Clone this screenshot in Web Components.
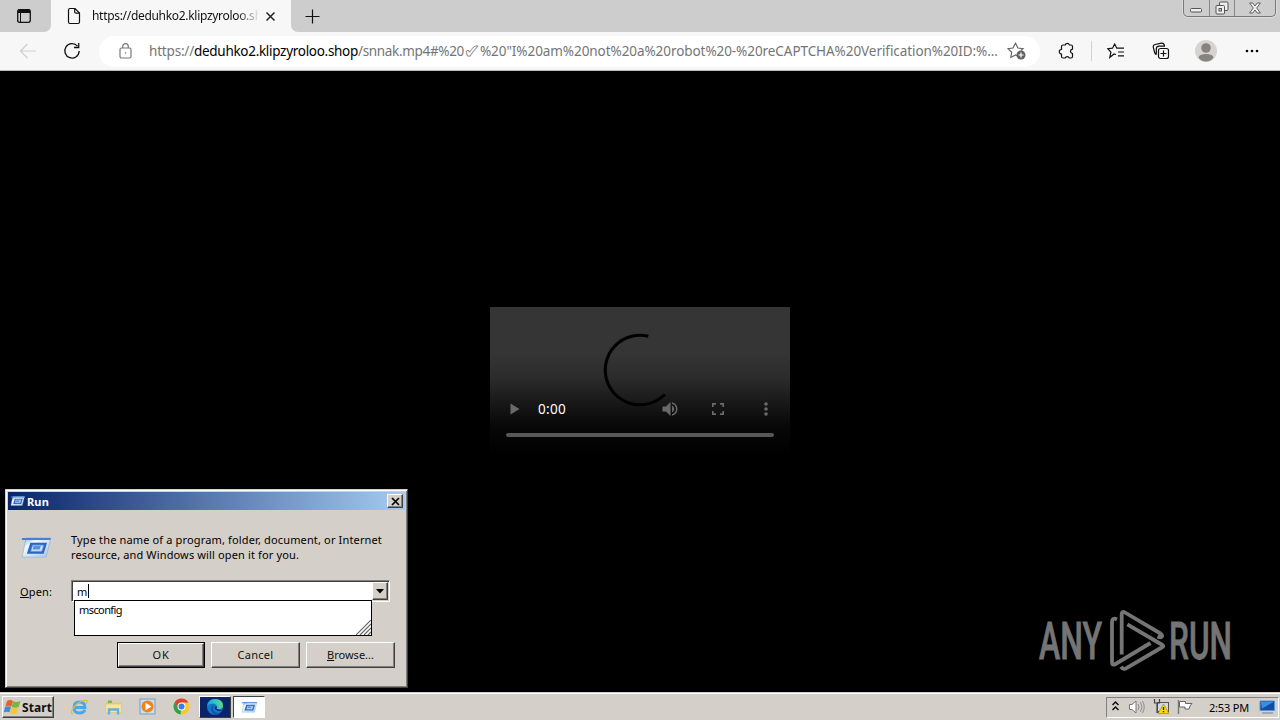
<!DOCTYPE html>
<html lang="en">
<head>
<meta charset="utf-8">
<title>Desktop</title>
<style>
  body {
    margin: 0;
    width: 1280px;
    height: 720px;
    overflow: hidden;
    background: #000;
    font-family: "Noto Sans", "Open Sans", sans-serif;
  }
</style>
</head>
<body>
<desk-top>
  <edge-browser slot="window"></edge-browser>
  <run-dialog slot="dialog"></run-dialog>
  <task-bar slot="bar"></task-bar>
</desk-top>

<script>
const RUN_ICON = `
  <defs>
    <linearGradient id="rim" x1="0" y1="0" x2="1" y2="1">
      <stop offset="0" stop-color="#6fa0e0"/><stop offset=".3" stop-color="#f2f7fd"/><stop offset="1" stop-color="#a5c4ec"/>
    </linearGradient>
  </defs>
  <path d="M5 1H31L26 21H1Z" fill="url(#rim)" stroke="#8fb0dd" stroke-width=".7"/>
  <path d="M1 1H31L30.300 3.200H.5Z" fill="#4a80cc"/>
  <path d="M9.500 6H27L23.500 17.500H6Z" fill="#2866c5"/>
  <path d="M12 8.500H23.500L21.500 15H10Z" fill="#cfe2f8" stroke="#6d9fe2" stroke-width=".8"/>
  <path d="M13 9.500H20.500L19.300 13H12Z" fill="#5b8fdc"/>`;

class DeskTop extends HTMLElement {
  constructor() {
    super();

    this.attachShadow({ mode: "open" });
    this.shadowRoot.innerHTML = `
    <style>
        :host {
            position: relative;
            display: grid;
            grid-template-rows: 692px 28px;
            width: 1280px;
            height: 720px;
        }

        #dialog {
            position: absolute;
            left: 5px;
            top: 489px;
        }

        #mark {
            position: absolute;
            left: 1036px;
            top: 606px;
        }
    </style>
    <slot name="window"></slot>
    <slot name="bar"></slot>
    <div id="mark"><any-run></any-run></div>
    <div id="dialog"><slot name="dialog"></slot></div>
    `;
  }
}

class AnyRun extends HTMLElement {
  constructor() {
    super();

    this.attachShadow({ mode: "open" });
    this.shadowRoot.innerHTML = `
    <style>
        :host {
            display: block;
        }

        svg {
            display: block;
            overflow: visible;
        }

        text {
            font: 500 52px Roboto, sans-serif;
            fill: #757575;
            stroke: #757575;
            stroke-width: .8px;
        }
    </style>
    <svg width="210" height="80">
      <text x="3" y="53" textLength="63" lengthAdjust="spacingAndGlyphs">ANY</text>
      <text x="133" y="53" textLength="63" lengthAdjust="spacingAndGlyphs">RUN</text>
      <g fill="none" stroke="#757575" stroke-width="3.800" stroke-linejoin="round">
        <path d="M85.700 48.500V8.500Q85.700 4.500 89 6.500L124.500 27.500Q126.500 29 126 30.500Q125 32 121.500 30.500"/>
        <path d="M91.300 18.300L126.500 39Q128 40 126.500 41L90 62.300Q87 64 85 60.800"/>
        <path d="M81 13.500Q76 11 76 16V56Q76 60 79.500 58L114.500 37"/>
      </g>
    </svg>
    `;
  }
}

class EdgeBrowser extends HTMLElement {
  constructor() {
    super();

    this.attachShadow({ mode: "open" });
    this.shadowRoot.innerHTML = `
    <style>
        :host {
            display: grid;
            grid-template-rows: 32px 39px 1fr;
            background: #000;
            color: #111;
        }

        svg {
            display: block;
            flex: none;
        }

        #tabs {
            display: flex;
            background: #cdcdcd;
        }

        #tabs-left {
            display: flex;
            background: #f7f7f7;
        }

        #tab-actions {
            width: 51px;
            box-sizing: border-box;
            padding-right: 3px;
            display: flex;
            justify-content: center;
            align-items: center;
            background: #cdcdcd;
            border-bottom-right-radius: 7px;
        }

        #new-tab {
            width: 42px;
            display: flex;
            align-items: center;
            justify-content: center;
            background: #cdcdcd;
            border-bottom-left-radius: 7px;
        }

        #tab {
            width: 240px;
            box-sizing: border-box;
            padding: 0 14px 0 15px;
            display: flex;
            align-items: center;
            background: linear-gradient(#f7f7f7, #f7f7f7) content-box, #f7f7f7;
            font-size: 12px;
        }

        #title {
            width: 166px;
            margin: 0 7px 0 10px;
            overflow: hidden;
            white-space: nowrap;
            line-height: 18px;
            -webkit-mask-image: linear-gradient(90deg, #000 145px, transparent 168px);
            mask-image: linear-gradient(90deg, #000 145px, transparent 168px);
        }

        #controls {
            margin-left: auto;
            margin-right: 4px;
            width: 93px;
            height: 17px;
            box-sizing: border-box;
            display: grid;
            grid-template-columns: 25px 25px 1fr;
            border: 1px solid #777;
            border-top: 0;
            border-radius: 0 0 5px 5px;
            box-shadow: 0 0 0 1px #dcdcdc;
        }

        #controls span {
            display: flex;
            align-items: center;
            justify-content: center;
        }

        #controls span + span {
            border-left: 1px solid #888;
        }

        #toolbar {
            display: flex;
            align-items: center;
            box-sizing: border-box;
            background: #f7f7f7;
            border-bottom: 1px solid #b9b9b9;
        }

        #address {
            display: flex;
            align-items: center;
            width: 941px;
            height: 31px;
            box-sizing: border-box;
            padding-left: 19px;
            border-radius: 16px;
            background: #fff;
            font-size: 13.500px;
            color: #757575;
            line-height: 20px;
        }

        #url {
            display: flex;
            width: 848px;
            margin: 0 10px 0 16px;
        }

        #host {
            color: #000;
        }

        #tick {
            width: 16px;
            font-family: "DejaVu Sans", sans-serif;
            font-size: 19px;
            color: transparent;
            -webkit-text-stroke: .8px #777;
        }

        #buttons {
            display: grid;
            grid-template-columns: 52px 47px 43px 47px 46px;
            align-items: center;
            justify-items: center;
        }

        #extensions {
            justify-self: stretch;
            padding: 1px 0 1px 18px;
            border-right: 1px solid #d2d2d2;
        }

        #page {
            display: flex;
            justify-content: center;
            align-items: flex-start;
            padding-top: 236px;
        }
    </style>
    <div id="tabs">
      <div id="tabs-left">
        <div id="tab-actions">
          <svg width="16" height="16" viewBox="0 0 16 16"><rect x="1.700" y="1.700" width="12.600" height="12.600" rx="2" fill="none" stroke="#111" stroke-width="1.300"/><path d="M2 1.500H14V5H2Z" fill="#111"/><path d="M4.500 5V14" stroke="#111"/></svg>
        </div>
        <div id="tab">
          <svg width="16" height="18" viewBox="0 0 16 18"><path d="M2.500 3Q2.500 1.500 4 1.500H9L13.500 6V15Q13.500 16.500 12 16.500H4Q2.500 16.500 2.500 15ZM8.700 1.500V5Q8.700 6.200 10 6.200H13.500" fill="none" stroke="#111" stroke-width="1.200"/></svg>
          <div id="title"><fit-text width="157">https://deduhko2.klipzyroloo.</fit-text>sh</div>
          <svg width="11" height="11" viewBox="0 0 11 11"><path d="M1.500 1.500L9.500 9.500M9.500 1.500L1.500 9.500" stroke="#222" stroke-width="1.500"/></svg>
        </div>
        <div id="new-tab">
          <svg width="15" height="15" viewBox="0 0 15 15"><path d="M7.500 .5V14.500M.5 7.500H14.500" stroke="#111" stroke-width="1.200"/></svg>
        </div>
      </div>
      <div id="controls">
        <span><svg width="13" height="6" style="margin-top: 3px"><rect x=".5" y="1.500" width="11" height="3.500" rx="1" fill="#eee" stroke="#555"/></svg></span>
        <span><svg width="14" height="14" viewBox="0 0 14 14"><rect x="4.500" y="1" width="8.500" height="8.500" rx="1" fill="#eee" stroke="#555"/><rect x="1" y="4.500" width="8.500" height="8.500" rx="1" fill="#eee" stroke="#555"/><rect x="4" y="7.500" width="2.500" height="2.500" fill="#ccc" stroke="#555"/></svg></span>
        <span><svg width="12" height="12" viewBox="0 0 12 12"><path d="M.6 1H3.800L6 4L8.200 1H11.400L7.700 6L11.400 11H8.200L6 8L3.800 11H.6L4.300 6Z" fill="#eee" stroke="#555" stroke-width=".9"/></svg></span>
      </div>
    </div>
    <div id="toolbar">
      <svg width="99" height="38" viewBox="0 32 99 38" fill="none">
        <path d="M36 51H20.500M27.500 44L20.500 51L27.500 58" stroke="#d0d0d0" stroke-width="1.200"/>
        <path d="M77.500 46.200A7.200 7.200 0 1 0 79.200 51M78.700 43V47.500H74" stroke="#111" stroke-width="1.300"/>
      </svg>
      <div id="address">
        <svg width="15" height="18" viewBox="0 0 15 18" fill="none" stroke="#777" stroke-width="1.200"><rect x="2" y="6" width="11" height="10" rx="1.500"/><path d="M4.700 6V4.500A2.800 2.800 0 0 1 10.300 4.500V6"/><circle cx="7.500" cy="11" r=".8" fill="#777" stroke="none"/></svg>
        <div id="url"><fit-text width="45">https://</fit-text><fit-text width="164" id="host">deduhko2.klipzyroloo.shop</fit-text><fit-text width="106">/snnak.mp4#%20</fit-text><span id="tick">✔</span><fit-text width="518">%20"I%20am%20not%20a%20robot%20-%20reCAPTCHA%20Verification%20ID:%...</fit-text></div>
        <svg width="20" height="20" viewBox="0 0 20 20"><path d="M10.500 15L8.500 14L3.800 16.500L4.700 11.300L1 7.700L6 7L8.500 2.300L11 7L16 7.700L14 9.500" fill="none" stroke="#666" stroke-width="1.200"/><circle cx="14" cy="14" r="4.500" fill="#606060"/><path d="M14 11.500V16.500M11.500 14H16.500" stroke="#fff" stroke-width="1.200"/></svg>
      </div>
      <div id="buttons">
        <div id="extensions"><svg width="18" height="18" viewBox="0 0 18 18"><path d="M3.500 4.500Q3.500 3 5 3H7.200A2.200 2.200 0 0 1 11.400 3H13Q14.500 3 14.500 4.500V7A1 1 0 0 1 14 7.300A2 2 0 0 0 14 11.200L14.500 11.500V14.500Q14.500 16 13 16H11.300A2.200 2.200 0 0 0 7.200 16H5Q3.500 16 3.500 14.500V12A2.200 2.200 0 0 1 3.500 7.500Z" fill="none" stroke="#111" stroke-width="1.200"/></svg></div>
        <svg width="18" height="18" viewBox="0 0 18 18"><path d="M9 12.500L7 12L2.800 15.500L3.900 10.200L.8 6.700L5.500 6.200L7.700 2L9.800 6.200H17M11 10H17M11 13.800H17" fill="none" stroke="#111" stroke-width="1.200"/></svg>
        <svg width="18" height="18" viewBox="0 0 18 18" fill="none" stroke="#111" stroke-width="1.200"><rect x="6.500" y="6.500" width="10" height="10" rx="2"/><path d="M11.500 8.500V14.500M8.500 11.500H14.500M4.500 12.800Q3 12 2.500 10L1.200 5Q1 3 3 2.500L9.500 1.200Q12 1 12.500 4M4.300 12V7Q4.500 4.200 7 4.200H13"/></svg>
        <svg width="22" height="22" viewBox="0 0 22 22"><circle cx="11" cy="11" r="11" fill="#d6d4d1"/><circle cx="11" cy="8" r="4.800" fill="#878480"/><path d="M3.500 17.500Q4 14 11 14T18.500 17.500Q16 21.500 11 21.500T3.500 17.500Z" fill="#878480"/></svg>
        <svg width="16" height="4" viewBox="0 0 16 4"><circle cx="3" cy="2" r="1.300"/><circle cx="8" cy="2" r="1.300"/><circle cx="13" cy="2" r="1.300"/></svg>
      </div>
    </div>
    <div id="page"><video-box></video-box></div>
    `;
  }
}

class VideoBox extends HTMLElement {
  constructor() {
    super();

    this.attachShadow({ mode: "open" });
    this.shadowRoot.innerHTML = `
    <style>
        :host {
            position: relative;
            display: flex;
            flex-direction: column;
            width: 300px;
            height: 150px;
            background: linear-gradient(#353535 0, #353535 45px, #2c2c2c 70px, #151515 100px, #070707 120px, #000 150px);
        }

        #spinner {
            position: absolute;
            left: 110px;
            top: 23px;
        }

        #controls {
            display: grid;
            grid-template-columns: 48px 108px 48px 48px 48px;
            align-items: center;
            height: 32px;
            margin-top: 86px;
            position: relative;
        }

        #controls svg {
            justify-self: center;
            fill: #6a6a6a;
        }

        #time {
            color: #fff;
            font-size: 13.500px;
            line-height: 20px;
        }

        #track {
            height: 4px;
            margin: 8px 16px 0;
            border-radius: 2px;
            background: #575757;
        }
    </style>
    <svg id="spinner" width="80" height="80"><path d="M49 6.200A34.800 34.800 0 1 0 65.500 64.500" transform="translate(-.7 0)" fill="none" stroke="#000" stroke-width="3"/></svg>
    <div id="controls">
      <svg width="18" height="18" viewBox="0 0 18 18"><path d="M5.500 3.500V14.500L14.500 9Z"/></svg>
      <span id="time"><fit-text width="28">0:00</fit-text></span>
      <svg width="18" height="18" viewBox="0 0 18 18"><path d="M1.500 6.500H5L9.500 2V16L5 11.500H1.500ZM11 5.500Q13.200 6.700 13.200 9T11 12.500ZM11 2.200Q16.500 3.700 16.500 9T11 15.800V14.200Q15 13 15 9T11 3.800Z"/></svg>
      <svg width="18" height="18" viewBox="0 0 18 18"><path d="M3 3H7V4.700H4.700V7H3ZM11 3H15V7H13.300V4.700H11ZM3 11H4.700V13.300H7V15H3ZM13.300 11H15V15H11V13.300H13.300Z"/></svg>
      <svg width="18" height="18" viewBox="0 0 18 18"><circle cx="9" cy="4" r="1.800"/><circle cx="9" cy="9" r="1.800"/><circle cx="9" cy="14" r="1.800"/></svg>
    </div>
    <div id="track"></div>
    `;
  }
}

// Classic raised push button, "default" gets the extra black frame
class ClassicButton extends HTMLElement {
  constructor() {
    super();

    this.attachShadow({ mode: "open" });
    this.shadowRoot.innerHTML = `
    <style>
        :host {
            display: flex;
            align-items: center;
            justify-content: center;
            box-sizing: border-box;
            background: #d4cfc8;
            border: 1px solid;
            border-color: #fff #404040 #404040 #fff;
            box-shadow: inset -1px -1px #808080;
            color: #111;
        }

        :host([default]) {
            outline: 1px solid #000;
        }
    </style>
    <slot></slot>
    `;
  }
}

class RunDialog extends HTMLElement {
  constructor() {
    super();

    this.attachShadow({ mode: "open" });
    this.shadowRoot.innerHTML = `
    <style>
        :host {
            display: block;
            box-sizing: border-box;
            width: 403px;
            height: 199px;
            padding: 2px;
            background: #d4cfc8;
            border: 1px solid;
            border-color: #d4cfc8 #404040 #404040 #d4cfc8;
            box-shadow: inset 1px 1px #fff, inset -1px -1px #808080;
            color: #000;
            font-size: 11px;
            line-height: 15px;
        }

        header {
            display: flex;
            align-items: center;
            height: 18px;
            padding: 0 2px;
            background: linear-gradient(90deg, #0a246a, #a6caf0);
            color: #fff;
            font-size: 11px;
            font-weight: bold;
        }

        header svg {
            margin-right: 2px;
        }

        header fit-text {
            margin-top: 1px;
        }

        header classic-button {
            width: 16px;
            height: 14px;
            margin-left: auto;
        }

        header classic-button svg {
            margin: 0;
        }

        #intro {
            display: flex;
            align-items: center;
            height: 30px;
            margin: 22px 0 0 13px;
        }

        #intro div {
            display: flex;
            flex-direction: column;
            margin-left: 19px;
        }

        #row {
            position: relative;
            display: flex;
            align-items: center;
            margin: 18px 0 0 12px;
        }

        #field {
            display: flex;
            align-items: center;
            box-sizing: border-box;
            width: 319px;
            height: 22px;
            margin-left: 19px;
            padding-left: 5px;
            background: #fff;
            border: 1px solid;
            border-color: #808080 #fff #fff #808080;
            box-shadow: inset 1px 1px #404040, inset -1px -1px #d4cfc8;
        }

        #caret {
            width: 1px;
            height: 14px;
            background: #000;
        }

        #field classic-button {
            width: 16px;
            height: 18px;
            margin: 0 1px 0 auto;
        }

        #list {
            position: absolute;
            left: 54px;
            top: 20px;
            width: 298px;
            height: 36px;
            box-sizing: border-box;
            padding: 1px 4px;
            background: #fff;
            border: 1px solid #000;
        }

        #grip {
            position: absolute;
            right: 0;
            bottom: 0;
        }

        footer {
            display: flex;
            gap: 6px;
            justify-content: flex-end;
            margin: 40px 10px 0 0;
        }

        footer classic-button {
            width: 89px;
            height: 26px;
            padding-bottom: 2px;
        }

        footer classic-button[default] {
            width: 86px;
            height: 24px;
            margin: 1px 1px 1px 0;
        }
    </style>
    <header>
      <svg width="15" height="12" viewBox="-1 0 33 22">${RUN_ICON}</svg>
      <fit-text width="22">Run</fit-text>
      <classic-button><svg width="9" height="9" viewBox="0 0 9 9"><path d="M1 1L8 8M8 1L1 8" stroke="#000" stroke-width="1.700"/></svg></classic-button>
    </header>
    <div id="intro">
      <svg width="31" height="22" viewBox="0 0 32 23" style="margin-top: 2px">${RUN_ICON}</svg>
      <div>
        <fit-text width="311">Type the name of a program, folder, document, or Internet</fit-text>
        <fit-text width="228">resource, and Windows will open it for you.</fit-text>
      </div>
    </div>
    <div id="row">
      <fit-text width="32"><u>O</u>pen:</fit-text>
      <div id="field">
        <fit-text width="11">m</fit-text><span id="caret"></span>
        <classic-button><svg width="8" height="5"><path d="M0 0H8L4 4.500Z"/></svg></classic-button>
      </div>
      <div id="list">
        <fit-text width="43">msconfig</fit-text>
        <svg id="grip" width="15" height="15"><path d="M0 15L15 0M4 15L15 4M8 15L15 8M12 15L15 12" stroke="#666" stroke-width="1.200"/></svg>
      </div>
    </div>
    <footer>
      <classic-button default><fit-text width="17">OK</fit-text></classic-button>
      <classic-button><fit-text width="36">Cancel</fit-text></classic-button>
      <classic-button><fit-text width="47"><u>B</u>rowse...</fit-text></classic-button>
    </footer>
    `;
  }
}

class TaskBar extends HTMLElement {
  constructor() {
    super();

    this.attachShadow({ mode: "open" });
    this.shadowRoot.innerHTML = `
    <style>
        :host {
            display: flex;
            align-items: center;
            box-sizing: border-box;
            height: 28px;
            padding: 2px 0 0 2px;
            background: #d4cfc8;
            box-shadow: inset 0 1px #d4cfc8, inset 0 2px #fff;
            color: #000;
            font-size: 11px;
        }

        svg {
            display: block;
        }

        #start {
            width: 52px;
            height: 22px;
            font-size: 12px;
            font-weight: bold;
        }

        #start svg {
            margin-right: 1px;
        }

        #launch {
            display: grid;
            grid-template-columns: repeat(4, 34px);
            justify-items: center;
            margin-left: 8px;
        }

        .task {
            width: 32px;
            height: 22px;
            box-sizing: border-box;
            display: flex;
            align-items: center;
            justify-content: center;
            margin-left: 2px;
            border: 1px solid;
            border-color: #404040 #fff #fff #404040;
            background: #fff;
        }

        #edge {
            margin-left: 1px;
            background: #0a246a;
            border-color: #fff #404040 #404040 #fff;
        }

        #tray {
            display: flex;
            align-items: center;
            margin: 0 1px 0 auto;
            width: 173px;
            height: 21px;
            box-sizing: border-box;
            border: 1px solid;
            border-color: #808080 #fff #fff #808080;
        }

        #tray fit-text {
            margin: 0 10px 0 auto;
        }
    </style>
    <classic-button id="start">
      <svg width="17" height="16" viewBox="0 0 17 16"><path d="M3 2Q6 0 9 2L7.300 7.500Q4.500 6 1.300 7.500Z" fill="#e5602b"/><path d="M9.300 2.300Q12 4 16.500 2L14.700 8Q11 9.500 7.600 7.700Z" fill="#76b83f"/><path d="M1.100 8Q4 6.500 7 8L5.400 13.300Q3 12 -.3 13.500Z" fill="#4589d5"/><path d="M7.400 8.200Q10.500 10 14.300 8.500L12.600 14.300Q9 15.800 5.800 13.700Z" fill="#f6c634"/></svg>
      <fit-text width="30">Start</fit-text>
    </classic-button>
    <div id="launch">
      <svg width="18" height="18" viewBox="0 0 18 18"><path d="M15 11.800Q13.500 15 9.500 15Q4 15 4 9.500T9.500 4Q15 4 15 9.500H5" fill="none" stroke="#48a8e8" stroke-width="2.800"/><path d="M2.500 16Q-.5 14 5 8T17 2.500Q17.500 4 16 6" fill="none" stroke="#e0b84c" stroke-width="1.200"/></svg>
      <svg width="17" height="17" viewBox="0 0 17 17"><path d="M1 3H7L8 4.500H16V12H1Z" fill="#e8c968"/><path d="M3 2.500H7V5H3Z" fill="#6cb865"/><path d="M.7 6H16.300V14.500H.7Z" fill="#f6e5a0" stroke="#dfc26b" stroke-width=".6"/><path d="M4 16.500V11.500H13V16.500" fill="none" stroke="#65afd9" stroke-width="2.400"/></svg>
      <svg width="17" height="17" viewBox="0 0 17 17"><rect x="1" y="1" width="15" height="15" fill="#cbdcea" stroke="#6ba3cf"/><circle cx="8.500" cy="8.500" r="6" fill="#ef831c"/><path d="M6.500 4.700L12.500 8.500L6.500 12.300Z" fill="#fff"/></svg>
      <svg width="17" height="17" viewBox="0 0 17 17"><circle cx="8.500" cy="8.500" r="8" fill="#f7c92c"/><path d="M1.600 4.500L5.500 10L8.500 8.500L7.500 16.500A8 8 0 0 1 1.600 4.500Z" fill="#2ca34a"/><path d="M1.600 4.500A8 8 0 0 1 15.400 4.500H8.500L5 10Z" fill="#df4132"/><circle cx="8.500" cy="8.500" r="4" fill="#fff"/><circle cx="8.500" cy="8.500" r="3" fill="#397ee5"/></svg>
    </div>
    <div class="task" id="edge">
      <svg width="18" height="18" viewBox="0 0 18 18"><defs><linearGradient id="wave" x1="0" y1=".4" x2="1" y2=".2"><stop stop-color="#229ddd"/><stop offset=".55" stop-color="#36c6c4"/><stop offset="1" stop-color="#70dc65"/></linearGradient></defs><circle cx="9" cy="9" r="8" fill="#1478c9"/><path d="M1 8Q2 1 9 1Q17 1 17 8Q16 12 11 11Q9.500 10.500 11 9Q11 6 7 5.500Q3 5.500 1 8Z" fill="url(#wave)"/><path d="M8 7Q5 11 9 14Q12 16 15.500 13.500Q13 17 9 17Q4.500 14 5 10Q5.500 7 8 7Z" fill="#1155a4"/><path d="M10 8Q7.500 10 10 12Q13 14 16.500 12Q13 12 11 11Q9.700 10.500 11 9Z" fill="#0a246a"/></svg>
    </div>
    <div class="task"><svg width="17" height="13" viewBox="-1 0 34 23">${RUN_ICON}</svg></div>
    <div id="tray">
      <svg width="88" height="20" viewBox="1107 698 88 20" fill="none">
        <path d="M1112.500 706L1115.500 703L1118.500 706M1112.500 711L1115.500 708L1118.500 711" stroke="#111" stroke-width="1.500"/>
        <path d="M1129.500 705.500H1132L1136 702V714L1132 710.500H1129.500Z" fill="#fff" stroke="#777"/>
        <path d="M1138 705Q1140 708 1138 711M1140.500 703Q1143.500 708 1140.500 713M1142.500 702Q1146 708 1142.500 714" stroke="#888" stroke-width=".9"/>
        <rect x="1157.500" y="703.500" width="11" height="9" fill="#c7dce7" stroke="#555"/>
        <path d="M1154.500 700V704H1159.500V700M1157 704V713.500H1160" stroke="#444" stroke-width="1.200"/>
        <path d="M1163.500 705L1169 714.500H1158Z" fill="#ffd51c" stroke="#b28b00" stroke-width=".7"/>
        <path d="M1163.500 708V711M1163.500 712V713.300" stroke="#222" stroke-width="1.300"/>
        <path d="M1178.500 701V715" stroke="#777" stroke-width="1.400"/>
        <path d="M1179.500 702.500H1185.500V704.500H1192L1190 707L1189 710H1185V708H1179.500Z" fill="#fff" stroke="#666"/>
      </svg>
      <fit-text width="40">2:53 PM</fit-text>
      <svg width="17" height="16" viewBox="0 0 17 16" style="margin-right: 2px"><path d="M1 2H15.500V11.500H1Z" fill="#164ba2" stroke="#5f94d3"/><path d="M2 3H14.500L3 9.500Z" fill="#3a8fe0"/><path d="M3 14H14" stroke="#8798a8" stroke-width="1.500"/></svg>
    </div>
    `;
  }
}

// One line of text, tracked so that it fills the given width
class FitText extends HTMLElement {
  constructor() {
    super();

    this.attachShadow({ mode: "open" });
    this.shadowRoot.innerHTML = `<style>
        :host {
            display: inline-block;
            white-space: nowrap;
        }
    </style><slot></slot>`;
  }

  connectedCallback() {
    const width = Number(this.getAttribute("width"));
    const range = document.createRange();
    range.selectNodeContents(this);
    const natural = range.getBoundingClientRect().width;
    const count = this.textContent.length;

    this.style.letterSpacing = `${(width - natural) / count}px`;
    this.style.width = `${width}px`;
  }
}

customElements.define("desk-top", DeskTop);
customElements.define("any-run", AnyRun);
customElements.define("edge-browser", EdgeBrowser);
customElements.define("video-box", VideoBox);
customElements.define("classic-button", ClassicButton);
customElements.define("run-dialog", RunDialog);
customElements.define("task-bar", TaskBar);
// last, so that the text is measured with its final styles
customElements.define("fit-text", FitText);
</script>
</body>
</html>
